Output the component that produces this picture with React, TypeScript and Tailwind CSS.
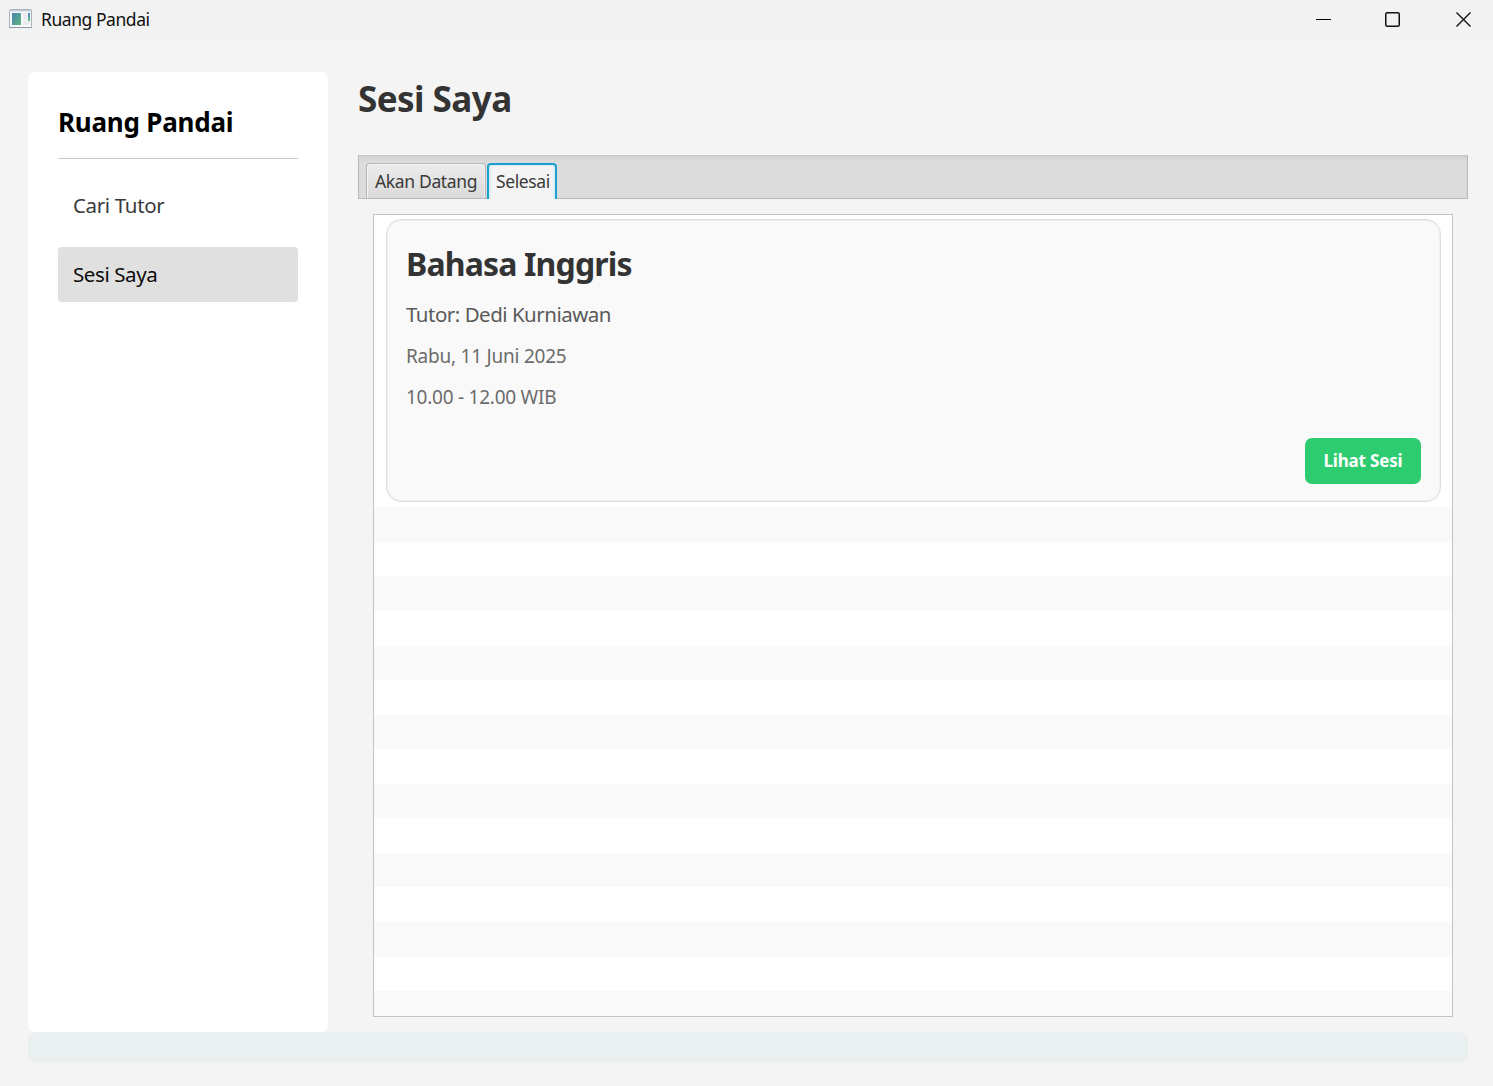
const stripes = Array.from({ length: 15 }, (_, i) => i);

function AppIcon() {
  return (
    <svg width="24" height="20" viewBox="0 0 24 20" className="shrink-0">
      <defs>
        <linearGradient id="pane" x1="0" y1="0" x2="1" y2="1">
          <stop offset="0" stopColor="#4a82b4" />
          <stop offset="1" stopColor="#5cb878" />
        </linearGradient>
        <linearGradient id="paneSmall" x1="0" y1="0" x2="0" y2="1">
          <stop offset="0" stopColor="#4a7fc0" />
          <stop offset="1" stopColor="#5cc07a" />
        </linearGradient>
      </defs>
      <rect x="0.5" y="0.5" width="22" height="18" rx="1" fill="#f8f9fa" stroke="#a9b1ba" />
      <rect x="1" y="1" width="21" height="1.5" fill="#c3cfdd" />
      <rect x="3" y="4" width="9" height="12" fill="url(#pane)" />
      <rect x="14" y="4" width="4" height="7" fill="#e9eaec" />
      <rect x="14" y="12" width="7" height="4" fill="#ececec" />
      <rect x="19" y="4" width="2" height="8" fill="url(#paneSmall)" />
      <rect x="0" y="18" width="23" height="1" fill="#8f9aa6" />
    </svg>
  );
}

function TitleBar() {
  return (
    <header className="flex h-[42px] shrink-0 items-start bg-[#f2f2f2] pl-[9px]">
      <div className="pt-[9px]">
        <AppIcon />
      </div>
      <span className="ml-[8px] mt-[7px] text-[17.5px] leading-[24px] tracking-[-0.45px] text-[#101010]">Ruang Pandai</span>
      <div className="ml-auto flex pr-[21px] pt-[12px]">
        <svg width="16" height="16" viewBox="0 0 16 16" className="mr-[53px]">
          <rect x="0" y="7" width="15" height="1" fill="#000" />
        </svg>
        <svg width="16" height="16" viewBox="0 0 16 16" className="mr-[55px]">
          <rect x="0.75" y="0.75" width="13.5" height="13.5" rx="1.5" fill="none" stroke="#111" strokeWidth="1.5" />
        </svg>
        <svg width="16" height="16" viewBox="0 0 16 16">
          <path d="M0.5 0.5 14.5 14.5M14.5 0.5 0.5 14.5" stroke="#111" strokeWidth="1.4" />
        </svg>
      </div>
    </header>
  );
}

function Sidebar() {
  return (
    <aside className="flex w-[300px] shrink-0 flex-col rounded-[7px] bg-white px-[30px] pt-[30px]">
      <div className="h-[57px] border-b border-[#c8c8c8] pt-[2px] text-[26px] font-bold leading-[37px] tracking-[-0.22px] text-black">
        Ruang Pandai
      </div>
      <nav className="mt-[19px] flex flex-col gap-[14px] text-[20.5px] leading-[55px]">
        <a className="h-[55px] rounded-[4px] px-[15px] tracking-[-0.35px] text-[#3a3a3a]">Cari Tutor</a>
        <a className="h-[55px] rounded-[4px] bg-[#e0e0e0] px-[15px] tracking-[-0.4px] text-[#0a0a0a]">Sesi Saya</a>
      </nav>
    </aside>
  );
}

function Tabs() {
  return (
    <div className="flex h-[44px] shrink-0 items-end border border-[#b9b9b9] border-t-[#c8c8c8] bg-[#dcdcdc] pl-[7px] text-[17.5px] text-[#3a3a3a] shadow-[inset_0_4px_4px_-2px_#cfcfcf]">
      <div className="h-[35px] w-[120px] rounded-t-[4px] border border-b-0 border-[#b5b5b5] bg-linear-to-b from-[#ececec] to-[#dadada] pl-[8px] leading-[34px] tracking-[-0.35px] shadow-[inset_1px_1px_0_#f7f7f7,inset_-1px_0_0_#f0f0f0]">
        Akan Datang
      </div>
      <div className="relative -mb-px ml-px h-[36px] w-[70px] rounded-t-[4px] border-2 border-b-0 border-[#1ba1d0] bg-[#f4f4f4] pl-[7px] leading-[33px] tracking-[-0.4px] shadow-[inset_2px_1px_0_#dcedf3,inset_-2px_0_0_#dcedf3]">
        Selesai
      </div>
    </div>
  );
}

function SessionCard() {
  return (
    <article className="ml-[12px] mr-[11px] mt-[4px] flex h-[283px] shrink-0 flex-col rounded-[15px] border border-[#dedede] bg-[#f9f9f9] px-[19px] pb-[17px] shadow-[inset_0_0_0_1px_#efefef]">
      <h2 className="mt-[21px] text-[32px] font-bold leading-[46px] tracking-[-0.85px] text-[#333]">Bahasa Inggris</h2>
      <p className="mt-[11px] text-[20.5px] leading-[32px] tracking-[-0.5px] text-[#5a5a5a]">Tutor: Dedi Kurniawan</p>
      <p className="mt-[10px] text-[19px] leading-[32px] tracking-[-0.23px] text-[#6c6c6c]">Rabu, 11 Juni 2025</p>
      <p className="mt-[9px] text-[19px] leading-[32px] tracking-[-0.25px] text-[#6c6c6c]">10.00 - 12.00 WIB</p>
      <button className="mt-auto h-[46px] w-[116px] self-end rounded-[7px] bg-[#2ecc71] text-[17px] font-bold leading-[44px] tracking-[-0.17px] text-white">
        Lihat Sesi
      </button>
    </article>
  );
}

export default function App() {
  return (
    <div className="flex h-[1086px] w-[1493px] flex-col overflow-hidden bg-[#f4f4f4] font-['Noto_Sans','Open_Sans',sans-serif]">
      <TitleBar />
      <div className="mt-[30px] flex h-[960px] shrink-0 pl-[28px] pr-[25px]">
        <Sidebar />
        <main className="ml-[30px] flex min-w-0 flex-1 flex-col">
          <h1 className="h-[83px] shrink-0 text-[35px] font-bold leading-[53px] tracking-[-0.55px] text-[#333]">Sesi Saya</h1>
          <Tabs />
          <section className="mx-[15px] mb-[15px] mt-[15px] flex min-h-0 flex-1 flex-col overflow-hidden border border-[#c3c3c3] bg-white">
            <div className="flex h-[292.4px] shrink-0 flex-col">
              <SessionCard />
            </div>
            {stripes.map((i) => (
              <div key={i} className={i % 2 === 0 ? "h-[34.55px] shrink-0 bg-[#f9f9f9]" : "h-[34.55px] shrink-0 bg-white"} />
            ))}
          </section>
        </main>
      </div>
      <footer className="ml-[28px] mr-[25px] h-[30px] shrink-0 rounded-[7px] bg-[#eaeff0]" />
    </div>
  );
}
